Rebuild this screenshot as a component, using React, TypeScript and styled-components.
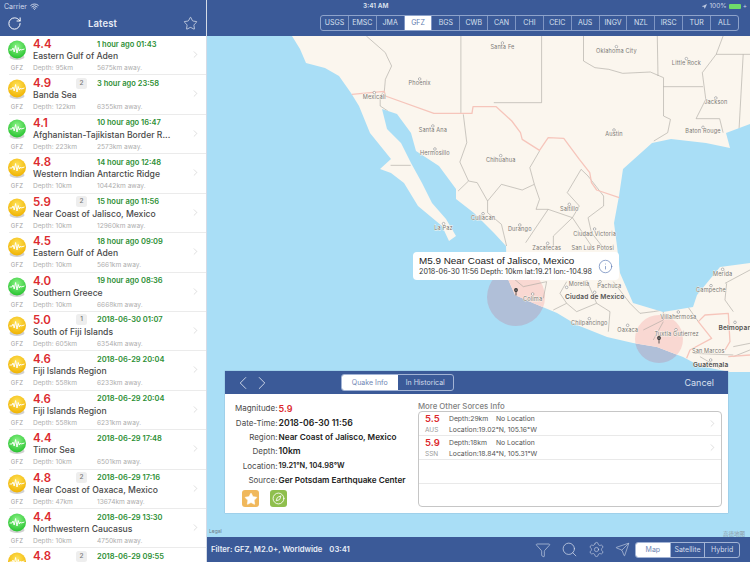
import React, { useId } from 'react';
import styled, { createGlobalStyle } from 'styled-components';
import { ChevronLeft, ChevronRight, Funnel, Info, Navigation, RotateCw, Search, Send, Settings, Star, Wifi, Compass } from 'lucide-react';

const BLUE = '#3b5a98';
const FONT = '"Inter", "Liberation Sans", "Noto Sans CJK SC", sans-serif';

const Global = createGlobalStyle`
  html, body { margin: 0; padding: 0; width: 750px; height: 562px; overflow: hidden; background: #fff; }
  * { box-sizing: border-box; }
  #root { width: 750px; height: 562px; }
`;

const Page = styled.div`
  display: flex; width: 750px; height: 562px; overflow: hidden; font-family: ${FONT}; color: #333;
`;
const Sidebar = styled.aside`
  width: 207px; flex: none; display: flex; flex-direction: column; background: #fff; border-right: 1px solid #d5dbe6; overflow: hidden;
`;
const SideHeader = styled.header`
  height: 36px; flex: none; background: ${BLUE}; color: #fff; display: flex; flex-direction: column;
`;
const Status = styled.div`
  height: 12px; display: flex; align-items: center; gap: 3px; padding: 0 4px; font-size: 7px; color: #d3dbeb;
`;
const NavRow = styled.div`
  flex: 1; display: flex; align-items: center; justify-content: space-between; padding: 0 8px 2px 7px;
`;
const NavTitle = styled.div`
  font-size: 9.5px; font-weight: 600; color: #e6ebf5; letter-spacing: .1px;
`;
const List = styled.div`
  flex: 1; overflow: hidden;
`;
const Row = styled.div`
  height: 39.43px; margin-left: 9px; padding-top: 2px; display: flex; border-bottom: 1px solid #ebebeb; position: relative; flex: none;
`;
const IconCol = styled.div`
  width: 20px; flex: none; display: flex; flex-direction: column; align-items: center; margin-left: -2px; padding-top: 2px;
`;
const Source = styled.div`
  font-size: 6px; line-height: 8px; color: #a3a3a3; margin-top: 3px; letter-spacing: .2px;
`;
const Body = styled.div`
  flex: 1; display: flex; flex-direction: column; min-width: 0; margin-left: 6px;
`;
const Line = styled.div`
  display: grid; grid-template-columns: 43px 21px 1fr; height: 12px; align-items: center;
`;
const Mag = styled.div`
  font-size: 11.5px; font-weight: 600; color: #dc2a2e; line-height: 12px;
`;
const Badge = styled.div`
  width: 11px; height: 11px; border-radius: 2.5px; background: #eeeeee; color: #777; font-size: 6.5px; text-align: center; line-height: 11px; font-weight: 500;
`;
const When = styled.div`
  font-size: 7.5px; font-weight: 600; color: #2d8f35; white-space: nowrap;
`;
const Place = styled.div`
  font-size: 8.6px; font-weight: 500; color: #4a4a4a; height: 12px; line-height: 12px; white-space: nowrap;
`;
const Meta = styled.div`
  display: grid; grid-template-columns: 64px 1fr; font-size: 6.6px; color: #adadad; height: 12px; line-height: 12px;
`;
const RowChevron = styled(ChevronRight)`
  position: absolute; right: 5px; top: 13px; color: #c9c9c9;
`;

const Main = styled.main`
  flex: 1; display: flex; flex-direction: column; min-width: 0;
`;
const TopBar = styled.div`
  height: 36px; flex: none; background: ${BLUE}; position: relative; padding: 15px 12px 0 113px;
`;
const TopStatus = styled.div`
  position: absolute; top: 0; left: 0; right: 0; height: 12px; display: flex; align-items: center; justify-content: flex-end; padding-right: 3px; gap: 2px; font-size: 6.5px; color: #c9d3e6;
`;
const Clock = styled.div`
  position: absolute; left: 156px; top: 0; font-size: 6.5px; line-height: 12px; font-weight: 600; color: #dfe5f0;
`;
const Battery = styled.div`
  width: 12px; height: 5px; background: #6fdc6a; border-radius: 1px;
`;
const Segments = styled.div`
  display: flex; border: 1px solid #8ea3cb; border-radius: 3px; overflow: hidden; height: 16px; width: 419px;
`;
const Seg = styled.div<{ $on?: boolean }>`
  flex: 1; text-align: center; font-size: 7px; line-height: 14px; color: ${p => (p.$on ? '#5f7bb0' : '#d8e0ef')}; background: ${p => (p.$on ? '#fff' : 'transparent')}; border-left: 1px solid #7f96c3;
  &:first-child { border-left: 0; }
`;
const MapArea = styled.div`
  flex: 1; position: relative; overflow: hidden; background: #a9def6;
`;
const MapSvg = styled.svg`
  position: absolute; inset: 0; display: block; width: 100%; height: 100%;
`;
const Callout = styled.div`
  position: absolute; left: 206px; top: 216px; width: 206px; height: 28px; background: #fff; border-radius: 4px; padding: 3px 6px; display: flex; align-items: center; justify-content: space-between;
`;
const CalloutTitle = styled.div`
  font-family: "Liberation Sans", sans-serif; font-size: 9.9px; line-height: 12px; color: #222;
`;
const CalloutSub = styled.div`
  font-size: 7.2px; line-height: 10px; color: #333; white-space: nowrap;
`;
const Panel = styled.section`
  position: absolute; left: 18px; top: 335px; width: 503px; height: 142px; background: #fff; display: flex; flex-direction: column; box-shadow: 0 0 1px rgba(60,80,120,.5);
`;
const PanelHead = styled.div`
  height: 23px; flex: none; background: ${BLUE}; display: grid; grid-template-columns: 116px 113px 1fr; align-items: center; color: #dfe6f3; padding-right: 14px;
`;
const Arrows = styled.div`
  display: flex; gap: 0; padding-left: 7px; color: #e6ebf5;
  & > svg + svg { margin-left: -3px; }
`;
const Toggle = styled.div`
  display: flex; height: 17px; border: 1px solid #a3b4d5; border-radius: 3px; overflow: hidden; font-size: 7px;
`;
const ToggleItem = styled.div<{ $on?: boolean }>`
  flex: 1; text-align: center; line-height: 15px; background: ${p => (p.$on ? '#fff' : 'transparent')}; color: ${p => (p.$on ? '#6f86b4' : '#d4dcec')};
`;
const Cancel = styled.div`
  text-align: right; font-size: 9px; color: #d9e0ee;
`;
const PanelBody = styled.div`
  flex: 1; display: flex; min-height: 0;
`;
const Facts = styled.div`
  width: 193px; flex: none; padding-top: 7px; display: flex; flex-direction: column;
`;
const Fact = styled.div`
  display: grid; grid-template-columns: 52.5px 1fr; column-gap: 1px; height: 14.4px; align-items: center; white-space: nowrap;
`;
const FactLabel = styled.div`
  font-size: 8px; color: #4a4a4a; text-align: right;
`;
const FactValue = styled.div<{ $red?: boolean; $size?: number }>`
  font-size: ${p => p.$size ?? 8.2}px; font-weight: 600; color: ${p => (p.$red ? '#dc2a2e' : '#222')};
`;
const Actions = styled.div`
  display: flex; gap: 11px; padding: 3px 0 0 17px;
`;
const ActionBtn = styled.div<{ $bg: string }>`
  width: 17px; height: 17px; border-radius: 3px; background: ${p => p.$bg}; display: flex; align-items: center; justify-content: center; color: #fff;
`;
const Others = styled.div`
  flex: 1; padding: 7px 6px 6px 0; display: flex; flex-direction: column;
`;
const OthersTitle = styled.div`
  font-size: 7.8px; line-height: 10px; color: #808080; font-weight: 500;
`;
const OthersTable = styled.div`
  flex: 1; margin-top: 0; border: 1px solid #c6c6c6; border-radius: 4px; display: flex; flex-direction: column; overflow: hidden;
`;
const Other = styled.div`
  height: 24px; flex: none; border-bottom: 1px solid #e9e9e9; display: grid; grid-template-columns: 24px 47px 1fr 14px; grid-template-rows: 12px 11px; padding-left: 6px; align-items: center; font-size: 6.8px; color: #555;
`;
const OtherMag = styled.div`
  font-size: 9.5px; font-weight: 600; color: #dc2a2e;
`;
const OtherSrc = styled.div`
  font-size: 6.5px; color: #999;
`;
const OtherLoc = styled.div`
  grid-column: 2 / 4;
`;
const OtherChevron = styled(ChevronRight)`
  grid-column: 4; grid-row: 1 / 3; color: #c4c4c4;
`;
const BottomBar = styled.footer`
  height: 25px; flex: none; background: ${BLUE}; display: flex; align-items: center; padding: 0 10px 0 4px; color: #e6ebf5;
`;
const FilterText = styled.div`
  font-size: 7.7px; font-weight: 600; color: #e8edf6; white-space: nowrap; flex: 1;
`;
const FilterTime = styled.span`
  margin-left: 7px;
`;
const Tools = styled.div`
  display: flex; align-items: center; gap: 10px; margin-right: 5.5px; color: #d9e0ee;
`;
const MapModes = styled.div`
  display: flex; width: 105px; height: 16px; border: 1px solid #a3b4d5; border-radius: 3px; overflow: hidden; font-size: 7px;
`;
const MapMode = styled.div<{ $on?: boolean }>`
  flex: 1; text-align: center; line-height: 14px; background: ${p => (p.$on ? '#fff' : 'transparent')}; color: ${p => (p.$on ? '#6f86b4' : '#d4dcec')}; border-left: 1px solid #a3b4d5;
  &:first-child { border-left: 0; }
`;

type Q = { m: string; c: 'g' | 'y'; n?: number; t: string; p?: string; d?: string; a?: string };
const quakes: Q[] = [
  { m: '4.4', c: 'g', t: '1 hour ago 01:43', p: 'Eastern Gulf of Aden', d: '95km', a: '5675km' },
  { m: '4.9', c: 'y', n: 2, t: '3 hour ago 23:58', p: 'Banda Sea', d: '122km', a: '6355km' },
  { m: '4.1', c: 'g', t: '10 hour ago 16:47', p: 'Afghanistan-Tajikistan Border R...', d: '223km', a: '2573km' },
  { m: '4.8', c: 'y', t: '14 hour ago 12:48', p: 'Western Indian Antarctic Ridge', d: '10km', a: '10442km' },
  { m: '5.9', c: 'y', n: 2, t: '15 hour ago 11:56', p: 'Near Coast of Jalisco, Mexico', d: '10km', a: '12960km' },
  { m: '4.5', c: 'y', t: '18 hour ago 09:09', p: 'Eastern Gulf of Aden', d: '10km', a: '5661km' },
  { m: '4.0', c: 'g', t: '19 hour ago 08:36', p: 'Southern Greece', d: '10km', a: '6668km' },
  { m: '5.0', c: 'y', n: 1, t: '2018-06-30 01:07', p: 'South of Fiji Islands', d: '605km', a: '6354km' },
  { m: '4.6', c: 'y', t: '2018-06-29 20:04', p: 'Fiji Islands Region', d: '558km', a: '6233km' },
  { m: '4.6', c: 'y', t: '2018-06-29 20:04', p: 'Fiji Islands Region', d: '558km', a: '6231km' },
  { m: '4.4', c: 'g', t: '2018-06-29 17:48', p: 'Timor Sea', d: '10km', a: '6501km' },
  { m: '4.8', c: 'y', n: 2, t: '2018-06-29 17:16', p: 'Near Coast of Oaxaca, Mexico', d: '47km', a: '13674km' },
  { m: '4.4', c: 'g', t: '2018-06-29 13:30', p: 'Northwestern Caucasus', d: '10km', a: '4750km' },
  { m: '4.8', c: 'y', n: 2, t: '2018-06-29 09:55' },
];

function QuakeIcon({ c }: { c: 'g' | 'y' }) {
  const id = useId();
  const [a, b] = c === 'g' ? ['#8ff58a', '#27c22f'] : ['#ffe45c', '#f0b200'];
  return (
    <svg width="20" height="21" viewBox="0 0 20 21">
      <defs>
        <radialGradient id={id} cx="50%" cy="35%" r="65%">
          <stop offset="0%" stopColor={a} />
          <stop offset="100%" stopColor={b} />
        </radialGradient>
      </defs>
      <ellipse cx="10" cy="17" rx="7.5" ry="3" fill="#000" opacity=".18" />
      <circle cx="10" cy="9.5" r="9" fill={`url(#${id})`} />
      <path d="M2.5 10 L5 10 L6 8 L7.2 12 L8.6 5.5 L10 13 L11.2 7.5 L12.4 11 L13.4 9 L14.2 10 L17.5 9" fill="none" stroke="#fff" strokeWidth="1" strokeLinejoin="round" opacity=".95" />
    </svg>
  );
}

const SOURCES = ['USGS', 'EMSC', 'JMA', 'GFZ', 'BGS', 'CWB', 'CAN', 'CHI', 'CEIC', 'AUS', 'INGV', 'NZL', 'IRSC', 'TUR', 'ALL'];

const KX = 1 / 2.887;
const KY = 1 / 3;
const LAND =
  'M292 36 L300 49 L306 63 L325 68 L339 76 L351 93 L359 106 L370 133 L391 159 L380 169 L391 173 L404 183 L418 206 L442 226 L449 241 L456 236 L446 219 L432 203 L422 183 L411 163 L401 143 L387 129 L382 109 L397 114 L411 133 L416 151 L439 166 L456 189 L456 199 L474 213 L494 233 L506 246 L507 277 L515 295 L533 303 L557 313 L577 325 L607 337 L633 343 L657 347 L683 357 L700 366 L730 372 L750 372 L750 263 L720 267 L697 295 L693 307 L663 312 L633 303 L620 273 L617 246 L614 223 L619 196 L623 169 L652 143 L671 139 L706 143 L730 148 L726 133 L750 124 L750 36 Z';

const GRAY_A = [
  'M460 0 L515 50 L520 62 L533 90 L515 130 L512 165 L500 180 L500 210 L522 225',
  'M733 0 L733 232', 'M966 0 L966 200 L828 200',
  'M1087 0 L1087 75 L1120 95 L1160 100 L1200 112 L1280 108 L1318 125 L1318 240 L1338 250 L1330 290 L1290 315',
  'M1300 0 L1302 120', 'M1318 152 L1432 152', 'M1490 0 L1470 55 L1430 110 L1440 190 L1412 248 L1480 248 L1490 290',
  'M1470 55 L1568 55', 'M1548 55 L1536 280', 'M530 388 L588 388',
  'M740 235 L750 320 L730 378 L755 435 L725 465',
  'M755 435 L780 440 L810 495 L850 445 L910 462 L945 445 L960 490 L950 520 L985 520 L1055 545',
  'M960 345 L932 395 L945 445', 'M810 495 L810 530 L850 565 L865 630',
  'M1080 400 L1040 470 L1075 510 L1055 545 L1110 630', 'M1080 400 L1100 420 L1145 480 L1145 510 L1100 545 L1110 590 L1140 630',
  'M985 520 L920 620', 'M1055 545 L1000 600 L1000 630',
];
const GRAY_B = [
  'M340 115 L370 140 L440 125 L430 175', 'M460 210 L500 190 L530 215 L590 190 L630 215 L625 275',
  'M500 125 L480 160 L500 190', 'M560 120 L590 190', 'M640 125 L690 190 L720 220 L760 215 L790 210 L790 240 L730 270',
  'M790 210 L860 195 L895 245', 'M760 300 L790 245', 'M980 130 L975 180 L1000 215', 'M975 130 L1050 90',
  'M880 340 L1000 345', 'M900 350 L960 385', 'M1000 320 L1050 310', 'M1000 350 L1050 330',
];
const RED_A = 'M418 175 L512 166 L515 180 L655 232 L765 232 L768 212 L835 212 L880 255 L905 290 L910 310 L960 343 L985 305 L1030 307 L1075 370 L1105 410 L1110 440 L1125 462 L1190 485';
const RED_B = 'M860 355 L870 330 L935 295 L895 245 L915 225 L985 220 L990 305 L975 330 M985 350 L1050 345';

const a = (x: number, y: number): [number, number] => [207 + x * KX, 36 + y * KY];
const b = (x: number, y: number): [number, number] => [400 + x / 3, 240 + y / 3];
type City = { n: string; d?: [number, number]; l: [number, number]; bold?: boolean };
const cities: City[] = [
  { n: 'Santa Fe', d: a(853, 21), l: a(853, 39) },
  { n: 'Oklahoma City', d: a(1182, 32), l: a(1182, 50) },
  { n: 'Little Rock', d: a(1384, 68), l: a(1384, 86) },
  { n: 'Phoenix', d: a(614, 129), l: a(614, 148) },
  { n: 'Mexicali', d: a(483, 170), l: a(483, 189) },
  { n: 'Jackson', d: a(1469, 186), l: a(1469, 205) },
  { n: 'Santa Ana', d: a(652, 270), l: a(652, 288) },
  { n: 'Hermosillo', d: a(658, 339), l: a(658, 356) },
  { n: 'Chihuahua', d: a(848, 359), l: a(848, 378) },
  { n: 'Austin', d: a(1175, 282), l: a(1175, 301) },
  { n: 'Baton Rouge', d: a(1432, 274), l: a(1432, 291) },
  { n: 'Saltillo', d: a(1046, 505), l: a(1046, 524) },
  { n: 'Culiacan', d: a(797, 533), l: a(797, 552) },
  { n: 'Durango', d: a(903, 567), l: a(903, 585) },
  { n: 'La Paz', d: a(683, 563), l: a(683, 581) },
  { n: 'Ciudad Victoria', d: a(1119, 579), l: a(1119, 599) },
  { n: 'Zacatecas', d: b(443, 10), l: b(440, 29) },
  { n: 'San Luis Potosi', l: b(578, 31) },
  { n: 'Colima', d: b(398, 162), l: b(398, 183) },
  { n: 'Morelia', d: b(500, 142), l: b(537, 138) },
  { n: 'Pachuca', d: b(600, 125), l: b(628, 143) },
  { n: 'Ciudad de Mexico', d: b(584, 157), l: b(584, 178), bold: true },
  { n: 'Chilpancingo', d: b(568, 236), l: b(568, 254) },
  { n: 'Oaxaca', d: b(683, 256), l: b(683, 275) },
  { n: 'Villahermosa', d: b(835, 216), l: b(835, 236) },
  { n: 'Tuxtla Gutierrez', d: b(828, 269), l: b(830, 289) },
  { n: 'Campeche', d: b(933, 137), l: b(933, 155) },
  { n: 'Merida', d: b(968, 88), l: b(968, 107) },
  { n: 'Belmopan', d: b(1005, 247), l: b(1005, 269), bold: true },
  { n: 'San Marcos', l: b(925, 338) },
  { n: 'Guatemala', d: b(932, 360), l: b(932, 380), bold: true },
];
const CIRCLES = [
  { cx: 516, cy: 297, r: 29 },
  { cx: 659, cy: 339, r: 24 },
];

function QuakeMap() {
  return (
    <MapSvg viewBox="207 36 543 501">
      <defs>
        <clipPath id="landClip"><path d={LAND} /></clipPath>
      </defs>
      <rect x="207" y="36" width="543" height="501" fill="#a9def6" />
      {CIRCLES.map(c => <circle key={c.cx} {...c} fill="#b0bfd8" />)}
      <path d={LAND} fill="#fbf6ee" />
      <g clipPath="url(#landClip)">
        {CIRCLES.map(c => <circle key={c.cx} {...c} fill="#f9d8d2" />)}
      </g>
      <g fill="none" stroke="#a9a6a0" strokeWidth=".6" clipPath="url(#landClip)">
        <g transform={`translate(207 36) scale(${KX} ${KY})`}>
          {GRAY_A.map(d => <path key={d} d={d} vectorEffect="non-scaling-stroke" />)}
        </g>
        <g transform="translate(400 240) scale(.3333)">
          {GRAY_B.map(d => <path key={d} d={d} vectorEffect="non-scaling-stroke" />)}
        </g>
      </g>
      <g fill="none" stroke="#f6c5bb" strokeWidth="1.3" strokeLinejoin="round">
        <path transform={`translate(207 36) scale(${KX} ${KY})`} d={RED_A} vectorEffect="non-scaling-stroke" />
        <path transform="translate(400 240) scale(.3333)" d={RED_B} vectorEffect="non-scaling-stroke" />
      </g>
      {cities.map(c => (
        <g key={c.n}>
          {c.d && <circle cx={c.d[0]} cy={c.d[1]} r="1.3" fill="#fff" stroke="#777" strokeWidth=".5" />}
          <text x={c.l[0]} y={c.l[1]} textAnchor="middle" fontFamily={FONT} fontSize={c.bold ? 6.6 : 5.6} fontWeight={c.bold ? 600 : 400} fill={c.bold ? '#555' : '#7c7a76'} letterSpacing=".15" stroke="#fbf6ee" strokeWidth=".8" paintOrder="stroke">{c.n}</text>
        </g>
      ))}
      {[[516, 290], [659, 338]].map(([x, y]) => (
        <g key={x}>
          <path d={`M${x} ${y} L${x} ${y + 5.5}`} stroke="#333" strokeWidth=".8" />
          <circle cx={x} cy={y} r="1.9" fill="#333" />
          <circle cx={x} cy={y} r=".6" fill="#fff" />
        </g>
      ))}
      <text x="209" y="533" fontFamily={FONT} fontSize="5" fill="#6b7a85">Legal</text>
      <text x="723" y="536" fontFamily={FONT} fontSize="5.5" fill="#8c9aa5">高德地图</text>
    </MapSvg>
  );
}

export default function App() {
  return (
    <Page>
      <Global />
      <Sidebar>
        <SideHeader>
          <Status>Carrier <Wifi size={9} strokeWidth={2.5} /></Status>
          <NavRow>
            <RotateCw size={15} strokeWidth={1.6} />
            <NavTitle>Latest</NavTitle>
            <Star size={15} strokeWidth={1} />
          </NavRow>
        </SideHeader>
        <List>
          {quakes.map((q, i) => (
            <Row key={i}>
              <IconCol>
                <QuakeIcon c={q.c} />
                {q.p && <Source>GFZ</Source>}
              </IconCol>
              <Body>
                <Line>
                  <Mag>{q.m}</Mag>
                  {q.n ? <Badge>{q.n}</Badge> : <span />}
                  <When>{q.t}</When>
                </Line>
                {q.p && <Place>{q.p}</Place>}
                {q.p && (
                  <Meta>
                    <span>Depth: {q.d}</span>
                    <span>{q.a} away.</span>
                  </Meta>
                )}
              </Body>
              <RowChevron size={11} strokeWidth={1.3} />
            </Row>
          ))}
        </List>
      </Sidebar>
      <Main>
        <TopBar>
          <Clock>3:41 AM</Clock>
          <TopStatus>
            <Navigation size={5} fill="currentColor" />
            100%
            <Battery />
            +
          </TopStatus>
          <Segments>
            {SOURCES.map(s => <Seg key={s} $on={s === 'GFZ'}>{s}</Seg>)}
          </Segments>
        </TopBar>
        <MapArea>
          <QuakeMap />
          <Callout>
            <div>
              <CalloutTitle>M5.9 Near Coast of Jalisco, Mexico</CalloutTitle>
              <CalloutSub>2018-06-30 11:56 Depth: 10km lat:19.21 lon:-104.98</CalloutSub>
            </div>
            <Info size={15} strokeWidth={1.1} color="#5d7cb5" />
          </Callout>
          <Panel>
            <PanelHead>
              <Arrows>
                <ChevronLeft size={22} strokeWidth={.9} />
                <ChevronRight size={22} strokeWidth={.9} />
              </Arrows>
              <Toggle>
                <ToggleItem $on>Quake Info</ToggleItem>
                <ToggleItem>In Historical</ToggleItem>
              </Toggle>
              <Cancel>Cancel</Cancel>
            </PanelHead>
            <PanelBody>
              <Facts>
                <Fact><FactLabel>Magnitude:</FactLabel><FactValue $red $size={9}>5.9</FactValue></Fact>
                <Fact><FactLabel>Date-Time:</FactLabel><FactValue $size={8.7}>2018-06-30 11:56</FactValue></Fact>
                <Fact><FactLabel>Region:</FactLabel><FactValue>Near Coast of Jalisco, Mexico</FactValue></Fact>
                <Fact><FactLabel>Depth:</FactLabel><FactValue $size={8.7}>10km</FactValue></Fact>
                <Fact><FactLabel>Location:</FactLabel><FactValue $size={7.4}>19.21°N, 104.98°W</FactValue></Fact>
                <Fact><FactLabel>Source:</FactLabel><FactValue>Ger Potsdam Earthquake Center</FactValue></Fact>
                <Actions>
                  <ActionBtn $bg="#f0b85c"><Star size={14} fill="#fff" strokeWidth={1} /></ActionBtn>
                  <ActionBtn $bg="#8fbf4d"><Compass size={13} strokeWidth={1.6} /></ActionBtn>
                </Actions>
              </Facts>
              <Others>
                <OthersTitle>More Other Sorces Info</OthersTitle>
                <OthersTable>
                  <Other>
                    <OtherMag>5.5</OtherMag><span>Depth:29km</span><span>No Location</span>
                    <OtherChevron size={11} strokeWidth={1.2} />
                    <OtherSrc>AUS</OtherSrc><OtherLoc>Location:19.02°N, 105.16°W</OtherLoc>
                  </Other>
                  <Other>
                    <OtherMag>5.9</OtherMag><span>Depth:18km</span><span>No Location</span>
                    <OtherChevron size={11} strokeWidth={1.2} />
                    <OtherSrc>SSN</OtherSrc><OtherLoc>Location:18.84°N, 105.31°W</OtherLoc>
                  </Other>
                  <Other />
                </OthersTable>
              </Others>
            </PanelBody>
          </Panel>
        </MapArea>
        <BottomBar>
          <FilterText>Filter: GFZ, M2.0+, Worldwide<FilterTime>03:41</FilterTime></FilterText>
          <Tools>
            <Funnel size={16} strokeWidth={.9} />
            <Search size={17} strokeWidth={1} />
            <Settings size={17} strokeWidth={.8} />
            <Send size={15} strokeWidth={.9} />
          </Tools>
          <MapModes>
            <MapMode $on>Map</MapMode>
            <MapMode>Satellite</MapMode>
            <MapMode>Hybrid</MapMode>
          </MapModes>
        </BottomBar>
      </Main>
    </Page>
  );
}
